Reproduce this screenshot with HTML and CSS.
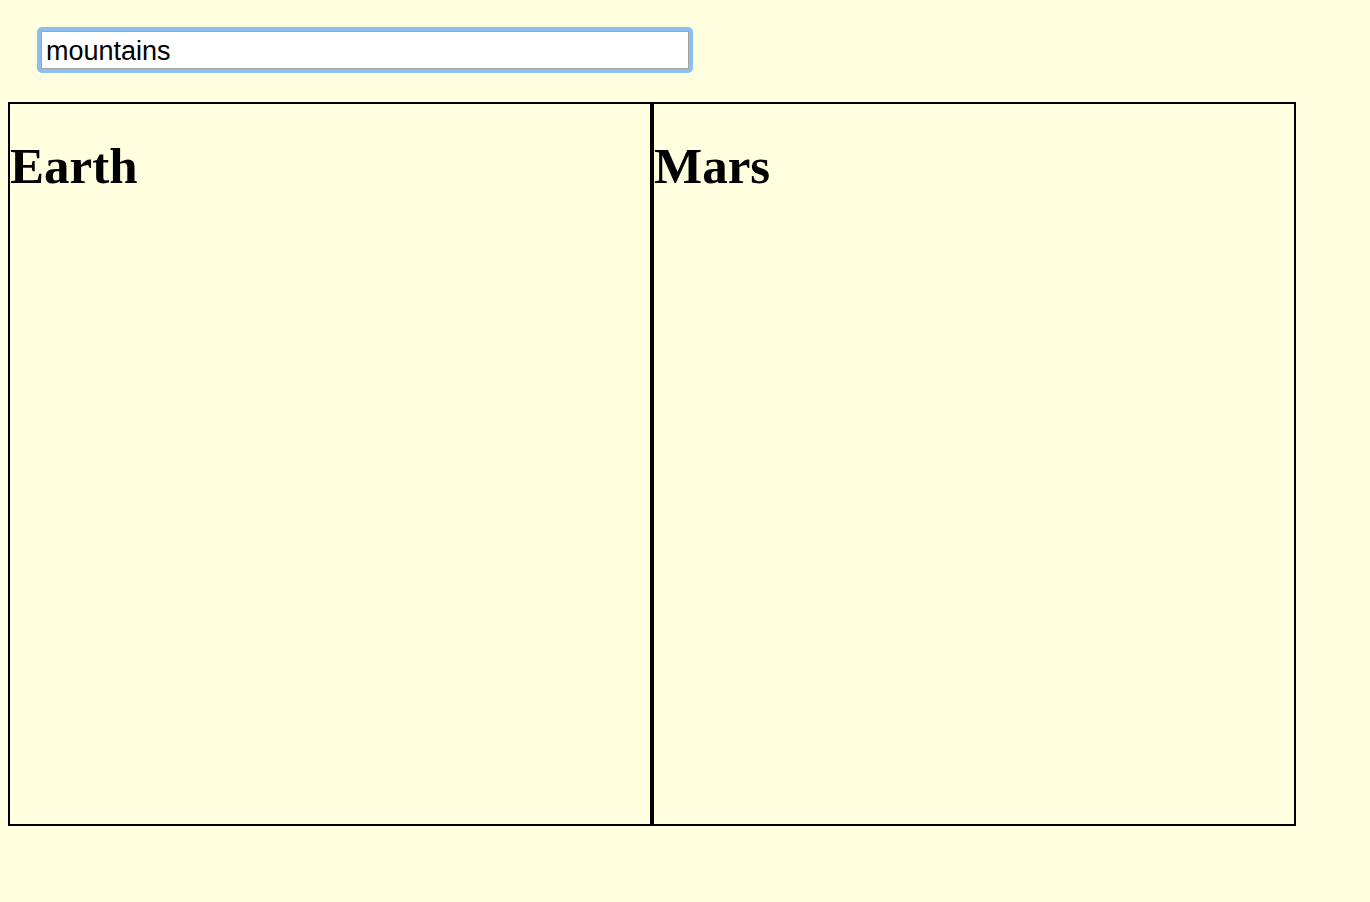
FILE: index.html
```html
<!DOCTYPE html>
<html>
<head>
<meta charset="utf-8">
<link rel="stylesheet" href="styles.css">
</head>
<body>
<div class="search-bar">
  <div class="search-ring"><input class="search" type="text" value="mountains"></div>
</div>
<div class="panels">
  <section class="panel"><h1 class="title">Earth</h1></section>
  <section class="panel"><h1 class="title">Mars</h1></section>
</div>
</body>
</html>
```
FILE: styles.css
```css
html, body {
  background: #ffffe0;
}
body {
  margin: 8px;
  font-family: "Liberation Serif", "Times New Roman", serif;
  color: #000;
}
.search-bar {
  padding: 19px 29px 29px;
}
.search-ring {
  display: inline-block;
  padding: 4px;
  border-radius: 5px;
  background: #8abff0;
  line-height: 0;
}
.search {
  box-sizing: border-box;
  width: 648px;
  height: 38px;
  margin: 0;
  padding: 3px 4px 0;
  border: 1px solid #a3a3a3;
  outline: none;
  background: #fff;
  font-family: "Liberation Sans", Arial, sans-serif;
  font-size: 27px;
  color: #000;
}
.panels {
  display: flex;
}
.panel {
  width: 640px;
  height: 720px;
  border: 2px solid #000;
}
.title {
  font-size: 51px;
  font-weight: bold;
  margin: 33px 0;
}
```
